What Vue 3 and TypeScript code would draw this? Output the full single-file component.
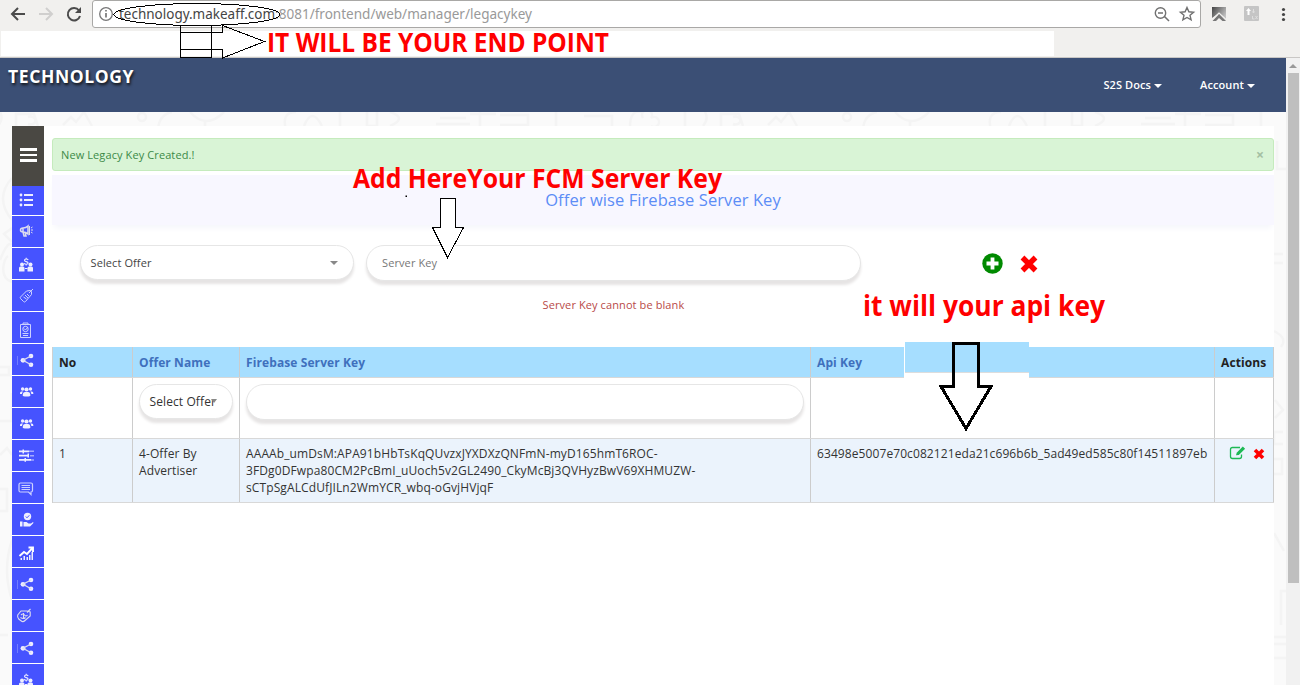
<script setup lang="ts">
type IconName = 'list' | 'horn' | 'money' | 'tag' | 'clip' | 'share' | 'users' | 'sliders' | 'chat' | 'hand' | 'chart' | 'badge'

const menu: IconName[] = [
  'list', 'horn', 'money', 'tag', 'clip', 'share', 'users', 'users', 'sliders',
  'chat', 'hand', 'chart', 'share', 'badge', 'share', 'money',
]

const serverKey: string[] = [
  'AAAAb_umDsM:APA91bHbTsKqQUvzxJYXDXzQNFmN-myD165hmT6ROC-',
  '3FDg0DFwpa80CM2PcBmI_uUoch5v2GL2490_CkyMcBj3QVHyzBwV69XHMUZW-',
  'sCTpSgALCdUfJILn2WmYCR_wbq-oGvjHVjqF',
]
</script>

<template>
  <div class="screen">
    <header class="browser">
      <div class="toolbar">
        <svg class="nav-icons" width="92" height="28" viewBox="0 0 92 28" fill="none" stroke-width="2">
          <path d="M25 14H12.5M18 8L12 14l6 6" stroke="#4b4b4b" />
          <path d="M39 14h12.500M46 8l6 6-6 6" stroke="#d0cfce" />
          <path d="M79 10.500A6.200 6.200 0 1 0 80 16" stroke="#4b4b4b" />
          <path d="M81 7v6h-6z" fill="#4b4b4b" />
        </svg>
        <div class="omnibox">
          <svg class="address" width="460" height="26" viewBox="0 0 460 26">
            <circle cx="13" cy="13" r="6.300" fill="none" stroke="#777" stroke-width="1.300" />
            <path d="M13 12v4.500M13 9v1.600" stroke="#777" stroke-width="1.700" />
            <text x="26" y="18" class="url host" textLength="156" lengthAdjust="spacingAndGlyphs">technology.makeaff.com</text>
            <text x="182" y="18" class="url" textLength="257" lengthAdjust="spacingAndGlyphs">:8081/frontend/web/manager/legacykey</text>
          </svg>
          <svg width="50" height="26" viewBox="0 0 50 26" fill="none" stroke="#707070">
            <circle cx="10.500" cy="12" r="5.200" stroke-width="1.400" />
            <path d="M8 12h5M14.500 15.500l4.500 4.500" stroke-width="1.500" />
            <path d="M37 6.500l1.900 4.300 4.700.4-3.600 3.100 1.100 4.600L37 16.500l-4.100 2.400 1.100-4.600-3.600-3.100 4.700-.4z" stroke-width="1.400" />
          </svg>
        </div>
        <svg width="99" height="28" viewBox="1201 0 99 28">
          <defs>
            <linearGradient id="ext" x1="0" y1="0" x2="1" y2=".6"><stop offset="0" stop-color="#444" /><stop offset="1" stop-color="#c4c4c4" /></linearGradient>
          </defs>
          <path d="M1212 7h14v14l-8-7-6 4z" fill="url(#ext)" />
          <path d="M1212.500 21l6.500-7 7 7h-3.500l-3.500-3-3 3z" fill="#777" />
          <path d="M1212 19.500l7-6.500 7.500 7" fill="none" stroke="#f1f0ee" stroke-width="1.200" />
          <rect x="1244" y="6" width="15" height="15" rx="1" fill="#c5c5c5" />
          <path d="M1247.500 15v-4h-1.500l2.500-3 2.500 3h-1.500v4z" fill="#fff" />
          <path d="M1253.500 9v4m-1-1.500l1 1.500 1-1.500M1252.500 16v3h2m1-3l2 3m0-3l-2 3" stroke="#dedede" fill="none" />
          <g fill="#444"><circle cx="1283.500" cy="9.500" r="1.600" /><circle cx="1283.500" cy="14.500" r="1.600" /><circle cx="1283.500" cy="19.500" r="1.600" /></g>
        </svg>
      </div>
      <div class="blank-strip"></div>
    </header>

    <div class="viewport">
      <div class="page">
        <nav class="topnav">
          <span class="brand">TECHNOLOGY</span>
          <span class="link docs">S2S Docs<i class="caret"></i></span>
          <span class="link">Account<i class="caret"></i></span>
        </nav>

        <div class="canvas">
          <svg class="doodles" width="1286" height="573" viewBox="0 112 1286 573" fill="none" stroke="#f4f4f4" stroke-width="2.500">
            <defs>
              <g id="doodle">
                <path d="M0 112q4 7-2 14M16 126v-12h18l4 12M28 117a5 4 0 1 1 0 7M63 125l8-8 5 5 8-10 8 14" />
                <circle cx="142" cy="117" r="4" />
                <path d="M158 128q2-14 14-16M190 112q16 18 34 0M205 120v8M286 130q-5-18 10-18M304 126q8-20 18 0M340 112v14M367 112v14h10v-14M390 112q18 6 0 14M440 118h26m-30 6h34M480 112v14m-10-12h26M500 115h28v10h-28M556 112v14M584 116h28v10M630 127q0-18 12-15M643 118a5 5 0 1 1 8 0 5 5 0 1 1 0 8M685 112v14" />
              </g>
            </defs>
            <use href="#doodle" />
            <use href="#doodle" x="705" />
            <path d="M12 178q-18 20 0 42M12 228l-8 6 8 8M0 260q8-20 12-15M12 282c-14-4-8-24-4-26M0 367h9v8H0M12 393v28H0M0 455l7-7 5 7M0 489h7v22H0M12 540q-10 30 0 60M0 635h8" />
            <path d="M1277 141v28h9M1274 254h9m-9 9h9M1274 331q14 7 7 16M1275 400l8 10-8 8M1283 432h-9v12h9M1274 459h8v15h-8M1274 533l10 18M1286 591h-5v34M1274 637h12m-12 7h12M1274 658h12" />
          </svg>

          <div class="sheet">
            <aside class="sidebar">
              <div class="burger"><i></i><i></i><i></i></div>
              <div v-for="(name, i) in menu" :key="i" class="menu-item" :class="{ low: name === 'clip' }">
                <svg width="20" height="20" viewBox="0 0 20 20" fill="#eef" stroke="none">
                  <g v-if="name === 'list'">
                    <path d="M6 4h9v2H6zM6 9h9v2H6zM6 14h9v2H6z" />
                    <circle cx="3" cy="5" r="1.400" /><circle cx="3" cy="10" r="1.400" /><circle cx="3" cy="15" r="1.400" />
                  </g>
                  <g v-else-if="name === 'horn'" fill="none" stroke="#dde">
                    <path d="M9 4v8q-2-2-5-2V6q3 0 5-2zM4 6q-2.500 0-2.500 2T4 10l1 4h2l-1-4" stroke-width="1.500" />
                    <path d="M10.500 4v9M12 6l1.500-1m-1.500 3h2m-2 2l1.500 1" />
                  </g>
                  <g v-else-if="name === 'money'">
                    <circle cx="3" cy="10.500" r="2" /><circle cx="11.500" cy="10.500" r="2" />
                    <path d="M0 17.500V14Q0 12.500 1.500 12.500H4q1.500 0 1.500 1.500v3.500zM8.500 17.500V14q0-1.500 1.500-1.500h2.500q1.500 0 1.500 1.500v3.500z" />
                    <path d="M9.200 6Q8.700 5 7.200 5 5.500 5 5.500 6.200q0 1.100 1.700 1.400 1.900.4 1.900 1.500Q9.100 10.300 7.200 10.300 5.600 10.300 5.200 9.200M7.200 3.800v1.200m0 5v1.500M6 14.500h2.500" fill="none" stroke="#eef" stroke-width="1.100" />
                  </g>
                  <g v-else-if="name === 'tag'" fill="none" stroke="#ccd1ff" stroke-width="1">
                    <path d="M1.500 11l6-6 4-.5q1.500 1 1 4L6.500 15.500q-1 1-2 0L1.500 12.500q-.7-.7 0-1.500zM10 7l4-4M12 5l2-2M4.500 11l3 2M6 9l3 3M8 8l2 2" />
                  </g>
                  <g v-else-if="name === 'clip'" fill="none" stroke="#ccd1ff">
                    <path d="M1.500 3.500h10v13h-10zM4 3.500V2h5v1.500M4 14.500h5M3.500 12.500h6" />
                    <circle cx="6.500" cy="8" r="2.700" /><path d="M5 7.500L6.500 9 9 6" />
                  </g>
                  <g v-else-if="name === 'share'">
                    <circle cx="4" cy="10.300" r="2.400" /><circle cx="12" cy="6" r="2.300" /><circle cx="12" cy="14.800" r="2.300" />
                    <path d="M12 6l-8 4.300 8 4.500" fill="none" stroke="#dde" stroke-width="1.300" />
                    <path d="M-1.500 6v9" stroke="#8790ff" stroke-width=".7" />
                  </g>
                  <g v-else-if="name === 'users'">
                    <circle cx="7.500" cy="7.500" r="2.100" /><circle cx="3.600" cy="7" r="1.700" /><circle cx="11.500" cy="7" r="1.700" />
                    <path d="M3.800 14v-1.500q0-2.500 2-2.500h3.500q2 0 2 2.500V14q-3.500 1-7.500 0zM1 12v-1q0-1.500 1.500-1.500H4q-1 1-1 2.500zM14.300 12v-1q0-1.500-1.500-1.500h-1.500q1 1 1 2.500z" />
                  </g>
                  <g v-else-if="name === 'sliders'">
                    <path d="M0 4.500h10v1.800H0zM0 8.700h10v1.800H0zM0 13h12v1.800H0zM3.500 3.500h1.500v4H3.500zM8.500 7.500H10v4H8.500zM5.500 12h1.500v3.800H5.500z" />
                    <path d="M10 4.500h5V6h-5zM11 9h4v1.500h-4zM12 13.200h3v1.500h-3z" fill="#a3a9ff" />
                  </g>
                  <g v-else-if="name === 'chat'" fill="none" stroke="#ccd1ff">
                    <path d="M1.500 5h10.500q1.500 0 1.500 1.500v6q0 1.500-1.500 1.500v2.500L9.500 14h-8Q0 14 0 12.500v-6Q0 5 1.500 5z" stroke-width="1.200" />
                    <path d="M2.500 7.500h8.500M2.500 9.500h8.500M2.500 11.500h8.500" />
                  </g>
                  <g v-else-if="name === 'hand'">
                    <circle cx="8.500" cy="6.500" r="3.700" /><path d="M6.800 6.500L8 7.800l2.300-2.500" fill="none" stroke="#4653ff" />
                    <path d="M1 11.500h2.500v5H1zM4.500 12h3l2 1.500H12l2-1.500q1 .5 0 1.500l-3 3h-6.500z" />
                  </g>
                  <g v-else-if="name === 'chart'">
                    <path d="M1.500 18v-2H3v2zM4.500 18v-4H6v4zM7.500 18v-3H9v3zM10 18v-5h1.500v5zM12.500 18v-8H14v8z" />
                    <path d="M.5 14L5 10l3 2 5.500-6M9.500 5.500H14V10" fill="none" stroke="#fff" stroke-width="1.900" />
                  </g>
                  <g v-else fill="none" stroke="#dde" stroke-width="1.100">
                    <path d="M-1.300 9L2 5h6l3.200 1v4L6 14.500q-1.500 1.500-3 1L-.3 13q-1.500-2-1-4zM8 6.500L11.500 3M2 9q2-2 3.500 0T8.500 9M4.500 7v6M1.500 11.500q3 2 5 0" />
                  </g>
                </svg>
              </div>
            </aside>

            <main class="content">
              <div class="alert"><span>New Legacy Key Created.!</span><b>×</b></div>
              <div class="title">Offer wise Firebase Server Key</div>
              <div class="form">
                <div class="pill select">Select Offer<i class="caret"></i></div>
                <div class="pill key">Server Key</div>
                <div class="buttons">
                  <svg width="22" height="22" viewBox="0 0 22 22"><circle cx="11.500" cy="11.500" r="10.200" fill="#008a00" /><path d="M11.500 5.500v12M5.500 11.500h12" stroke="#fff" stroke-width="3.800" /></svg>
                  <svg width="18" height="19" viewBox="0 0 18 19"><path d="M2.500 3.500l13 13m0-13l-13 13" stroke="#f00" stroke-width="5.400" /></svg>
                </div>
              </div>
              <div class="error">Server Key cannot be blank</div>

              <div class="grid">
                <div class="row head">
                  <div>No</div><div class="sort">Offer Name</div><div class="sort">Firebase Server Key</div><div class="sort">Api Key</div><div>Actions</div>
                </div>
                <div class="row filters">
                  <div></div>
                  <div><div class="pill small">Select Offer<i class="caret"></i></div></div>
                  <div><div class="pill search"></div></div>
                  <div></div><div></div>
                </div>
                <div class="row data">
                  <div>1</div>
                  <div>4-Offer By<br>Advertiser</div>
                  <div><p v-for="line in serverKey" :key="line">{{ line }}</p></div>
                  <div class="api">63498e5007e70c082121eda21c696b6b_5ad49ed585c80f14511897eb</div>
                  <div class="actions">
                    <svg width="17" height="14" viewBox="0 0 17 14" fill="none" stroke="#1db954"><path d="M11 1.500H3.500Q1.500 1.500 1.500 3.500v7q0 2 2 2h7q2 0 2-2V8.500" stroke-width="1.300" /><path d="M7 9.300l.7-2.600L13.800.6l2.300 2.200L9.800 9z" fill="#1db954" stroke="none" /></svg>
                    <svg width="12" height="12" viewBox="0 0 12 12"><path d="M2 2l8 8m0-8l-8 8" stroke="#f00" stroke-width="3.600" /></svg>
                  </div>
                </div>
              </div>
            </main>
          </div>
        </div>
      </div>
      <div class="scrollbar"><i class="up"></i><i class="thumb"></i></div>
    </div>

    <svg class="notes" width="1300" height="685" viewBox="0 0 1300 685">
      <g fill="none" stroke="#000" shape-rendering="crispEdges">
        <ellipse cx="197" cy="14.500" rx="83" ry="11" />
        <path d="M180.500 26v31.500h31V26M180.500 32.500h42V25.500L264.500 41.500L222.500 58V49.500h-42" />
        <path d="M440.500 198.500h15v29h8l-16 30-15-30h8z" fill="#fff" />
      </g>
      <path d="M405.500 195.500h1.500v1.500h-1.500z" />
      <path d="M904 346h1v32h-1z" fill="#fff" />
      <path d="M905 372h124v6h-124z" fill="#fff" />
      <path d="M905 342h124v30h-124z" fill="#a6deff" />
      <path d="M905 372h124v1h-124z" fill="#ddd" />
      <path d="M953.500 343.500h25v43h12.500L966 428.500L941 386.500h12.500z" fill="none" stroke="#000" stroke-width="3" shape-rendering="crispEdges" />
      <g class="note">
        <text x="267" y="52" textLength="342" lengthAdjust="spacingAndGlyphs">IT WILL BE YOUR END POINT</text>
        <text x="353" y="188" textLength="369" lengthAdjust="spacingAndGlyphs">Add HereYour FCM Server Key</text>
        <text x="863" y="316" class="large" textLength="242" lengthAdjust="spacingAndGlyphs">it will your api key</text>
      </g>
    </svg>
  </div>
</template>

<style>
html, body { overflow: hidden; }
</style>

<style scoped>
.screen { position: relative; width: 1300px; height: 685px; overflow: hidden; font-family: "Open Sans", "Noto Sans", sans-serif; font-size: 12px; letter-spacing: .1px; color: #333; background: #fff; }
.screen * { box-sizing: border-box; }
.browser { height: 58px; background: #f1f0ee; border-bottom: 1px solid #c9c7c5; }
.toolbar { display: flex; height: 28px; }
.omnibox { display: flex; justify-content: space-between; width: 1109px; height: 28px; background: #fff; border: 1px solid #a9a8a6; border-radius: 3px; flex: none; }
.address { overflow: visible; }
.url { font: 15px "Noto Sans", sans-serif; fill: #999; letter-spacing: 0; }
.url.host { fill: #444; }
.blank-strip { width: 1053px; height: 25px; margin: 3px 0 0 1px; background: #fff; }
.viewport { display: flex; height: 627px; }
.page { width: 1286px; }
.topnav { display: flex; height: 54px; background: #3b4f75; color: #fff; padding-right: 31px; }
.brand { margin: 6px auto 0 8px; font-size: 17.5px; line-height: 25px; font-weight: 700; text-shadow: 1px 2px 3px #111; letter-spacing: .6px; }
.link { display: flex; align-items: center; height: 53px; font-size: 11px; font-weight: 600; white-space: nowrap; }
.docs { margin-right: 38px; }
.caret { display: inline-block; border: 4px solid transparent; border-bottom: 0; border-top-color: currentColor; }
.link .caret { margin-left: 3px; margin-top: 2px; }
.canvas { position: relative; height: 573px; padding: 14px 12px 0; background: #fafafa; overflow: hidden; }
.doodles { position: absolute; left: 0; top: 0; }
.sheet { position: relative; display: flex; height: 559px; background: #fff; overflow: hidden; }
.sidebar { width: 32px; flex: none; }
.burger { display: flex; flex-direction: column; gap: 3px; height: 60px; padding: 22px 7px 0 8px; background: #4a4843; }
.burger i { height: 2.7px; background: #fff; flex: none; }
.menu-item { height: 32px; border-bottom: 1px solid #fff; background: #4653ff; padding: 6px 0 0 7px; }
.menu-item.low { padding-top: 9px; }
.burger + .menu-item { height: 30px; padding: 4px 0 0 6px; }
.menu-item svg { display: block; overflow: visible; }
.content { width: 1222px; margin-left: 8px; padding-top: 12px; }
.alert { display: flex; justify-content: space-between; align-items: center; height: 33px; padding: 0 9px 0 8px; background: #d9f4d6; border: 1px solid #c5ebbd; border-radius: 3px; color: #3c8a48; font-size: 11px; }
.alert b { color: #a4bfa3; font-size: 14px; }
.title { height: 50px; margin-top: 4px; background: #f8f7ff; box-shadow: 0 5px 6px -2px #f5f6fb; color: #5c8df6; font-size: 16.5px; line-height: 50px; text-align: center; letter-spacing: .08px; }
.form { display: flex; margin: 20px 0 0 28px; }
.pill { height: 36px; background: #fff; border: 1px solid #e6e6e6; border-radius: 18px; box-shadow: 0 4px 3px #e6e4e4; display: flex; align-items: center; white-space: nowrap; }
.select { width: 274px; height: 35px; padding: 0 15.5px 0 9.5px; justify-content: space-between; font-size: 11px; color: #444; }
.pill .caret { border-top-color: #888; }
.key { width: 495px; margin-left: 12px; padding: 0 0 2px 15px; font-size: 11px; color: #777; }
.buttons { display: flex; align-items: center; gap: 17px; margin-left: 120px; }
.error { margin: 15px 0 0 490.5px; height: 18px; font-size: 11px; line-height: 18px; color: #b94a48; }
.grid { margin-top: 33px; border-left: 1px solid #d0d0d0; }
.row { display: grid; grid-template-columns: 80px 107px 571px 404px 59px; border-bottom: 1px solid #d8d8d8; }
.row > div { border-right: 1px solid #ccc; padding: 6px 0 0 6px; line-height: 17px; white-space: nowrap; }
.head { height: 31px; background: #a6deff; font-weight: 700; color: #222; }
.head > div { padding-top: 7px; }
.head .sort { color: #3f70bd; }
.filters { height: 61px; }
.small { position: relative; width: 94px; height: 35px; padding-left: 9.5px; }
.small .caret { position: absolute; right: 15px; top: 14px; border-width: 4px 3px 0; }
.search { width: 558px; }
.data { height: 64px; background: #ebf3fc; }
.data p { margin: 0; letter-spacing: .11px; }
.api { letter-spacing: .09px; }
.row > .actions { display: flex; align-items: flex-start; gap: 7px; padding: 7px 0 0 14px; }
.actions svg:last-child { margin-top: 2px; }
.scrollbar { width: 14px; background: #f1f1f1; display: flex; flex-direction: column; align-items: center; }
.up { border: 4px solid transparent; border-top: 0; border-bottom-color: #999; margin: 6px 0 5px; }
.thumb { width: 11px; height: 510px; background: #bfbfbf; margin-left: 1px; }
.notes { position: absolute; left: 0; top: 0; }
.note { font: 700 26px "Open Sans", sans-serif; fill: #f00; letter-spacing: 0; }
.note .large { font-size: 28px; }
</style>
